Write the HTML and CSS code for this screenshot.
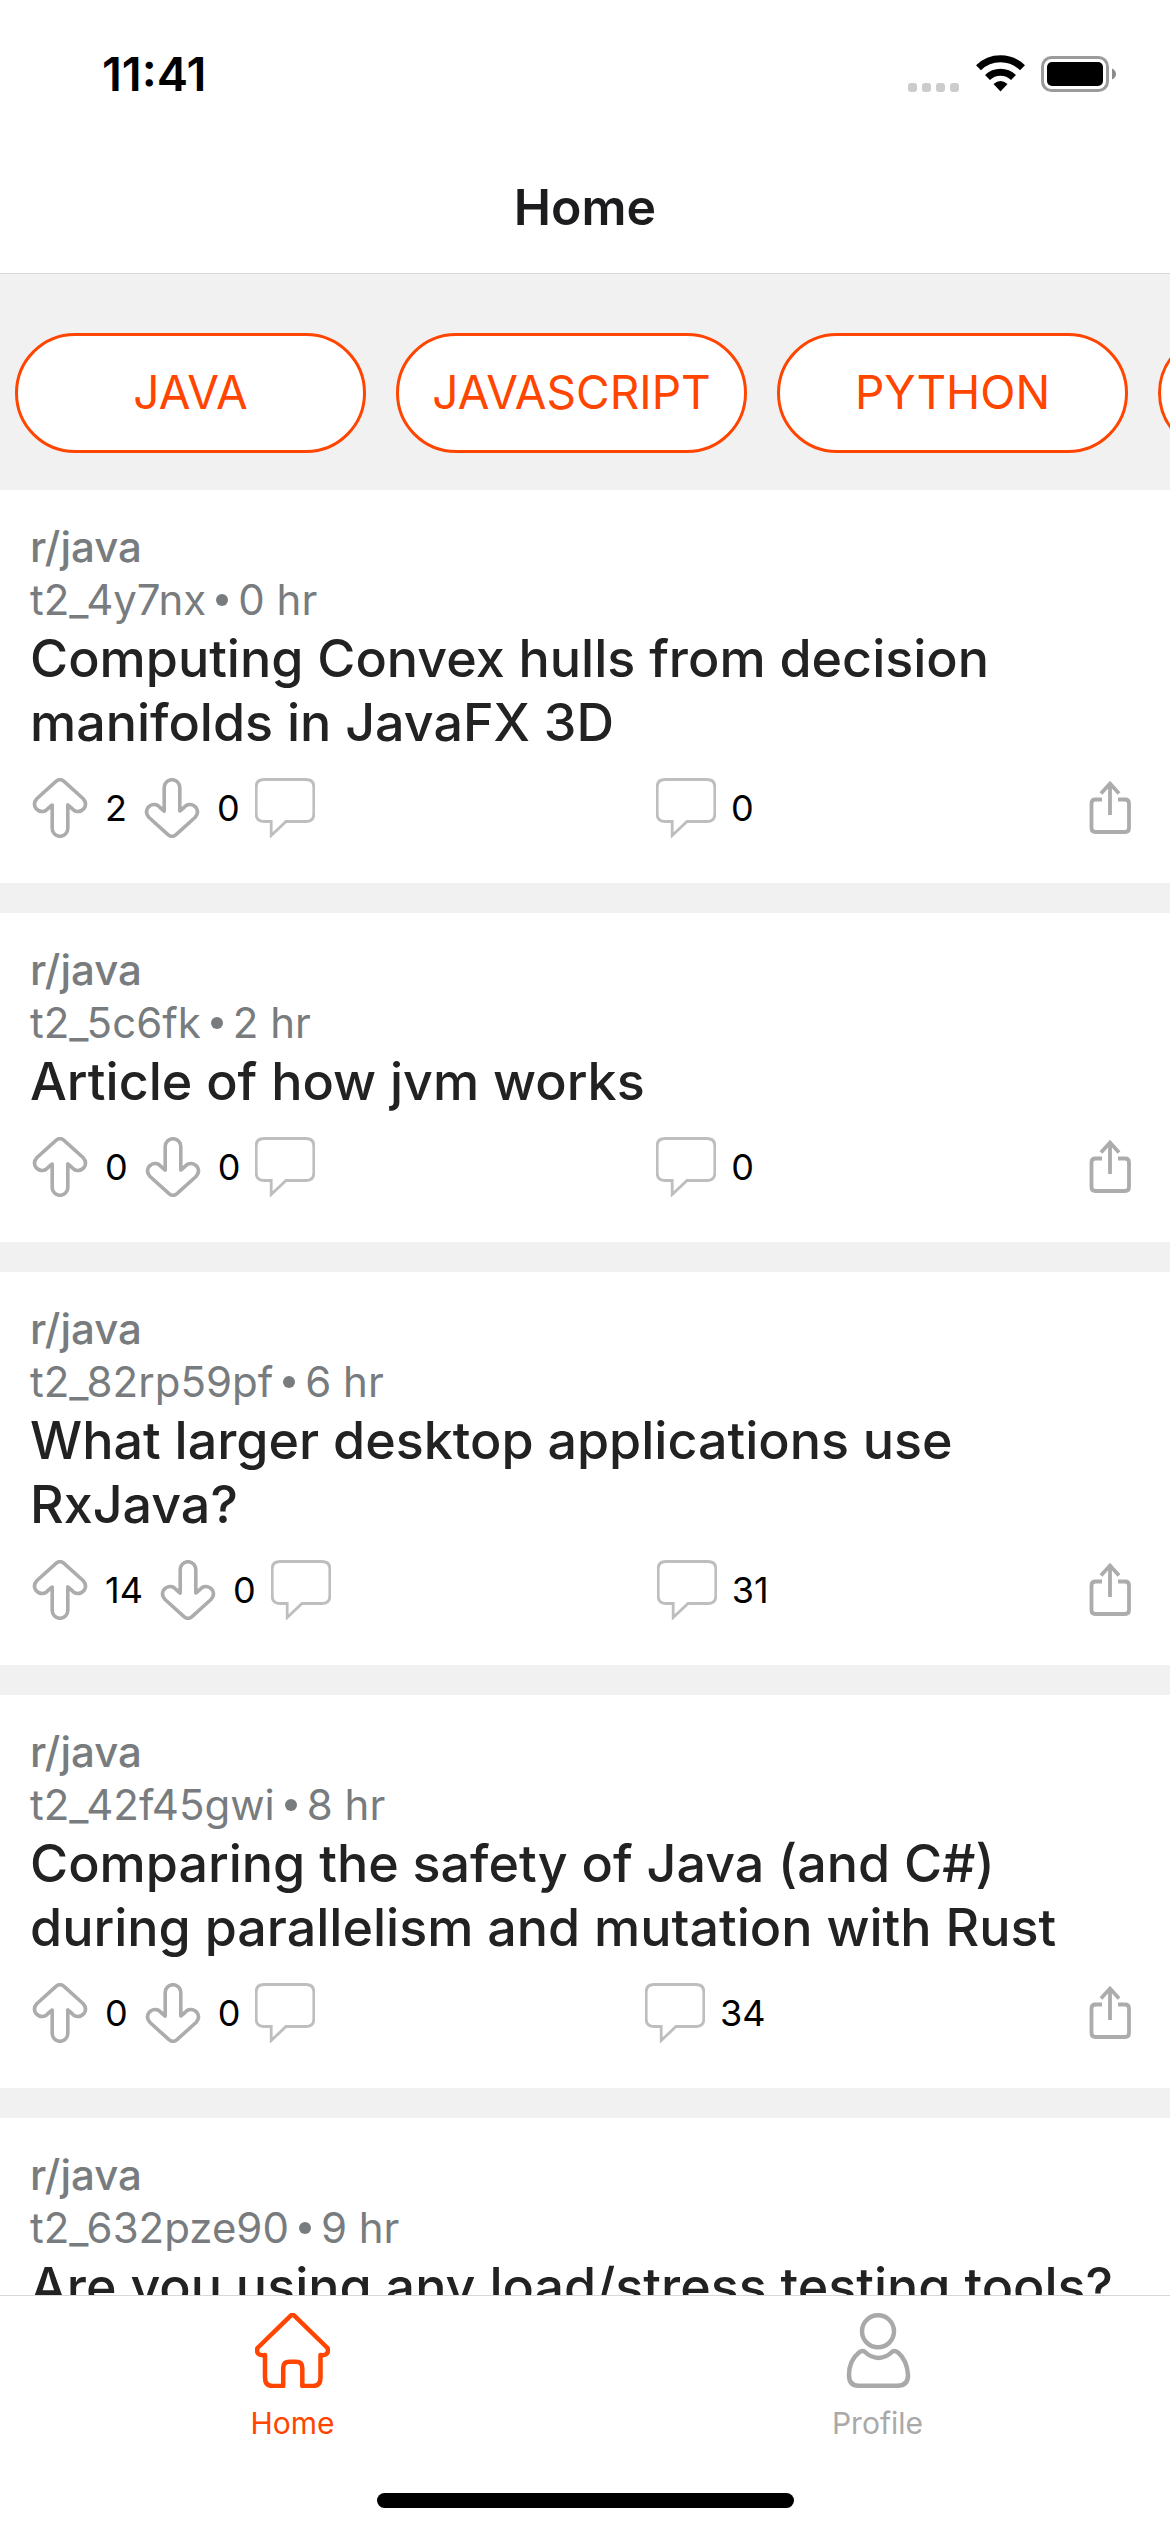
FILE: index.html
```html
<!DOCTYPE html>
<html lang="en">
<head>
<meta charset="utf-8">
<meta name="viewport" content="width=device-width, initial-scale=1">
<title>Home</title>
<link rel="stylesheet" href="styles.css">
</head>
<body>
<svg class="sprite" aria-hidden="true">
  <symbol id="arrow" viewBox="0 0 60 60">
    <path d="M26 3.300Q30 0 34 3.300L53 20.500Q57.500 25.500 54 30.500C50 35 44.500 34 42 30.500L37.800 27V50.500A7.800 7.800 0 0 1 22.200 50.500V27L18 30.500C15.500 34 10 35 6 30.500Q2.500 25.500 7 20.500Z" fill="none" stroke="currentColor" stroke-width="3.600" stroke-linejoin="round"/>
  </symbol>
  <symbol id="bubble" viewBox="0 0 60 60">
    <path d="M9 1.500H51Q58.800 1.500 58.800 9V36Q58.800 43.500 51 43.500H31L16.200 57.500V43.500H9Q1.200 43.500 1.200 36V9Q1.200 1.500 9 1.500Z" fill="none" stroke="currentColor" stroke-width="2.800"/>
  </symbol>
  <symbol id="share" viewBox="0 0 60 60">
    <path d="M22 21.500H15.500Q11.500 21.500 11.500 25.500V50Q11.500 54 15.500 54H45Q49 54 49 50V25.500Q49 21.500 45 21.500H38M30 37V6M21 15.500L30 5.500L39 15.500" fill="none" stroke="currentColor" stroke-width="3.800"/>
  </symbol>
  <symbol id="house" viewBox="0 0 75 75">
    <path d="M35.500 2.800Q37.500 1 39.500 2.800L72 34.500Q74 37 72 40.500Q70 42.800 65.500 42V64.500Q65.500 73 58 73H47.300V55Q47.300 48.800 41 48.800H34.500Q28.200 48.800 28.200 55V73H17.500Q10 73 10 64.500V42Q5 42.800 3 40.500Q1 37 3 34.500Z" fill="none" stroke="currentColor" stroke-width="4.500" stroke-linejoin="round"/>
  </symbol>
  <symbol id="person" viewBox="0 0 75 75">
    <g fill="none" stroke="currentColor" stroke-width="4.500">
      <circle cx="38" cy="18.300" r="16"/>
      <path d="M24.500 38.500Q22 37.300 19 39.500C12 45 9 53 9 62Q9 72.700 18.500 72.700H57.500Q68 72.700 68 62C67.500 53 64.500 45 58 39.500Q55 37.300 52.500 38.500C44 47 33 47 24.500 38.500Z"/>
    </g>
  </symbol>
</svg>

<header class="top">
  <div class="status">
    <time class="clock">11:41</time>
    <div class="indicators">
      <svg class="cell" viewBox="0 0 51 9" aria-hidden="true"><rect width="9" height="9" rx="3"/><rect x="14" width="9" height="9" rx="3"/><rect x="28" width="9" height="9" rx="3"/><rect x="42" width="9" height="9" rx="3"/></svg>
      <svg class="wifi" viewBox="0 0 49 37" aria-hidden="true"><g fill="none" stroke="#000" stroke-width="7"><path d="M2.500 12.800A31.500 31.500 0 0 1 46.500 12.800"/><path d="M11.500 22.500A18.500 18.500 0 0 1 37.500 22.500"/></g><path d="M24.500 36.500L17.500 29Q24.500 23 31.500 29Z"/></svg>
      <svg class="battery" viewBox="0 0 75 36" aria-hidden="true"><rect x="1.500" y="1.500" width="65" height="33" rx="9" fill="none" stroke="#9b9b9b" stroke-width="3"/><rect x="6" y="6" width="56" height="24" rx="5"/><path d="M71 12.500Q75 14.500 75 18T71 23.500Z" fill="#8c8c8c"/></svg>
    </div>
  </div>
  <h1 class="screen-title">Home</h1>
</header>

<main class="feed">
  <nav class="topics" aria-label="Topics">
    <button class="topic" type="button">JAVA</button>
    <button class="topic" type="button">JAVASCRIPT</button>
    <button class="topic" type="button">PYTHON</button>
    <button class="topic" type="button" aria-label="More topics"></button>
  </nav>

  <article class="post">
    <p class="community">r/java</p>
    <p class="byline"><span>t2_4y7nx</span><i class="dot"></i><span>0 hr</span></p>
    <h2 class="title">Computing Convex hulls from decision manifolds in JavaFX 3D</h2>
    <div class="actions">
      <div class="group">
        <button class="action" type="button" aria-label="Upvote"><svg class="icon"><use href="#arrow"/></svg><span>2</span></button>
        <button class="action" type="button" aria-label="Downvote"><svg class="icon down"><use href="#arrow"/></svg><span>0</span></button>
        <button class="action" type="button" aria-label="Reply"><svg class="icon pale"><use href="#bubble"/></svg></button>
      </div>
      <button class="action comments" type="button" aria-label="Comments"><svg class="icon pale"><use href="#bubble"/></svg><span>0</span></button>
      <button class="action" type="button" aria-label="Share"><svg class="icon"><use href="#share"/></svg></button>
    </div>
  </article>

  <article class="post">
    <p class="community">r/java</p>
    <p class="byline"><span>t2_5c6fk</span><i class="dot"></i><span>2 hr</span></p>
    <h2 class="title">Article of how jvm works</h2>
    <div class="actions">
      <div class="group">
        <button class="action" type="button" aria-label="Upvote"><svg class="icon"><use href="#arrow"/></svg><span>0</span></button>
        <button class="action" type="button" aria-label="Downvote"><svg class="icon down"><use href="#arrow"/></svg><span>0</span></button>
        <button class="action" type="button" aria-label="Reply"><svg class="icon pale"><use href="#bubble"/></svg></button>
      </div>
      <button class="action comments" type="button" aria-label="Comments"><svg class="icon pale"><use href="#bubble"/></svg><span>0</span></button>
      <button class="action" type="button" aria-label="Share"><svg class="icon"><use href="#share"/></svg></button>
    </div>
  </article>

  <article class="post">
    <p class="community">r/java</p>
    <p class="byline"><span>t2_82rp59pf</span><i class="dot"></i><span>6 hr</span></p>
    <h2 class="title">What larger desktop applications use RxJava?</h2>
    <div class="actions">
      <div class="group">
        <button class="action" type="button" aria-label="Upvote"><svg class="icon"><use href="#arrow"/></svg><span>14</span></button>
        <button class="action" type="button" aria-label="Downvote"><svg class="icon down"><use href="#arrow"/></svg><span>0</span></button>
        <button class="action" type="button" aria-label="Reply"><svg class="icon pale"><use href="#bubble"/></svg></button>
      </div>
      <button class="action comments" type="button" aria-label="Comments"><svg class="icon pale"><use href="#bubble"/></svg><span>31</span></button>
      <button class="action" type="button" aria-label="Share"><svg class="icon"><use href="#share"/></svg></button>
    </div>
  </article>

  <article class="post">
    <p class="community">r/java</p>
    <p class="byline"><span>t2_42f45gwi</span><i class="dot"></i><span>8 hr</span></p>
    <h2 class="title">Comparing the safety of Java (and C#) during parallelism and mutation with Rust</h2>
    <div class="actions">
      <div class="group">
        <button class="action" type="button" aria-label="Upvote"><svg class="icon"><use href="#arrow"/></svg><span>0</span></button>
        <button class="action" type="button" aria-label="Downvote"><svg class="icon down"><use href="#arrow"/></svg><span>0</span></button>
        <button class="action" type="button" aria-label="Reply"><svg class="icon pale"><use href="#bubble"/></svg></button>
      </div>
      <button class="action comments" type="button" aria-label="Comments"><svg class="icon pale"><use href="#bubble"/></svg><span>34</span></button>
      <button class="action" type="button" aria-label="Share"><svg class="icon"><use href="#share"/></svg></button>
    </div>
  </article>

  <article class="post">
    <p class="community">r/java</p>
    <p class="byline"><span>t2_632pze90</span><i class="dot"></i><span>9 hr</span></p>
    <h2 class="title">Are you using any load/stress testing tools?</h2>
  </article>
</main>

<footer class="bottom">
  <nav class="tabs" aria-label="Main">
    <a class="tab active" href="#home"><svg class="tab-icon" aria-hidden="true"><use href="#house"/></svg>Home</a>
    <a class="tab" href="#profile"><svg class="tab-icon" aria-hidden="true"><use href="#person"/></svg>Profile</a>
  </nav>
  <div class="home-bar"></div>
</footer>
</body>
</html>
```

FILE: styles.css
```css
* {
  box-sizing: border-box;
}

body {
  margin: 0;
  height: 100vh;
  display: flex;
  flex-direction: column;
  overflow: hidden;
  background: #fff;
  color: #000;
  font-family: Inter, "Liberation Sans", sans-serif;
}

p, h1, h2 {
  margin: 0;
}

button {
  font-family: inherit;
  cursor: pointer;
}

svg {
  display: block;
  flex: none;
}

.sprite {
  position: absolute;
  width: 0;
  height: 0;
}

/* Header */
.top {
  flex: none;
  border-bottom: 1px solid #d8d8d8;
}

.status {
  display: flex;
  justify-content: space-between;
  align-items: center;
  height: 141px;
  padding: 6px 54px 0 102px;
}

.clock {
  font-size: 47px;
  font-weight: 600;
}

.indicators {
  display: flex;
  align-items: flex-end;
}

.cell {
  width: 51px;
  height: 9px;
  margin-right: 17px;
  fill: #ccc;
}

.wifi {
  width: 49px;
  height: 37px;
  margin-right: 16px;
}

.battery {
  width: 75px;
  height: 36px;
}

.screen-title {
  height: 132px;
  line-height: 132px;
  color: #1c1c1e;
  font-size: 50px;
  font-weight: 600;
  text-align: center;
}

/* Feed */
.feed {
  flex: 1;
  min-height: 0;
  overflow: hidden;
  background: #f1f1f1;
}

.topics {
  display: flex;
  gap: 30px;
  padding: 59px 15px 37px;
  overflow: hidden;
}

.topic {
  flex: none;
  width: 351px;
  height: 120px;
  padding: 0 0 2px;
  border: 3px solid #ff4500;
  border-radius: 60px;
  background: #fff;
  color: #ff4500;
  font-size: 46px;
}

.post {
  margin-bottom: 30px;
  padding: 31px 30px 45px;
  background: #fff;
}

.community,
.byline {
  color: #787c7e;
  font-size: 42px;
}

.community {
  font-weight: 500;
  line-height: 52px;
}

.byline {
  display: flex;
  align-items: center;
  gap: 10px;
  line-height: 54px;
}

.dot {
  width: 12px;
  height: 12px;
  border-radius: 50%;
  background: currentColor;
}

.title {
  color: #222;
  font-size: 52px;
  font-weight: 500;
  line-height: 64px;
}

.actions {
  display: flex;
  justify-content: space-between;
  margin-top: 23px;
}

.group {
  display: flex;
  gap: 15px;
}

.action {
  display: flex;
  align-items: center;
  gap: 15px;
  padding: 0;
  border: 0;
  background: none;
  color: #000;
  font-size: 36px;
}

.comments {
  padding-left: 15px;
}

.icon {
  width: 60px;
  height: 60px;
  color: #acacac;
}

.pale {
  color: #bebebe;
}

.down {
  transform: rotate(180deg);
}

/* Tab bar */
.bottom {
  flex: none;
  border-top: 1px solid #d8d8d8;
}

.tabs {
  display: flex;
}

.tab {
  flex: 1;
  display: flex;
  flex-direction: column;
  align-items: center;
  gap: 15px;
  padding-top: 17px;
  color: #a9a9a9;
  font-size: 30px;
  line-height: 40px;
  text-decoration: none;
}

.tab.active {
  color: #ff4500;
}

.tab-icon {
  width: 75px;
  height: 75px;
}

.home-bar {
  width: 417px;
  height: 15px;
  margin: 50px auto 24px;
  border-radius: 8px;
  background: #000;
}
```
